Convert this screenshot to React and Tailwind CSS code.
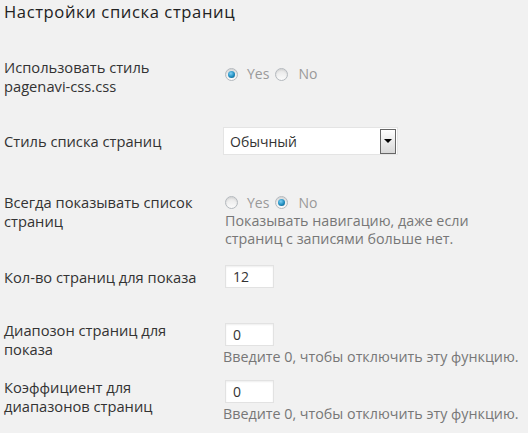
import React from "react";

function Radio({ checked }) {
  return (
    <span className="inline-flex items-center justify-center w-[13px] h-[13px] rounded-full border border-[#b4b9be] bg-gradient-to-b from-[#e6e6e6] to-[#fbfbfb] shadow-[inset_0_1px_2px_rgba(0,0,0,0.1)]">
      {checked && (
        <span className="block w-[7px] h-[7px] rounded-full bg-[radial-gradient(circle_at_40%_35%,#7fd0f5,#1e8cbe_55%,#0b4f78)]" />
      )}
    </span>
  );
}

function RadioPair({ yes }) {
  return (
    <div className="flex items-center text-[14px] text-[#999] h-[19px]">
      <Radio checked={yes} />
      <span className="ml-[9px] mr-[6px]">Yes</span>
      <Radio checked={!yes} />
      <span className="ml-[10px]">No</span>
    </div>
  );
}

function NumInput({ value }) {
  return (
    <div className="ml-[2px] w-[49px] h-[23px] bg-white border border-[#e2e2e2] shadow-[inset_0_1px_2px_rgba(0,0,0,0.07)] flex items-center pl-[7px] text-[14px] text-[#333]">
      {value}
    </div>
  );
}

const Desc = ({ children }) => (
  <div className="text-[14.3px] leading-[18px] text-[#777] whitespace-nowrap">{children}</div>
);

export default function App() {
  return (
    <div
      className="w-[528px] h-[433px] bg-[#f1f1f1] text-[#333] overflow-hidden pl-[4px]"
      style={{ fontFamily: '"Open Sans", "Noto Sans", sans-serif' }}
    >
      <h3 className="text-[16.6px] leading-[24px] tracking-[0.6px] text-[#222] whitespace-nowrap">
        Настройки списка страниц
      </h3>

      {/* Row 1 */}
      <div className="flex items-center mt-[34px] text-[14.7px] leading-[18.5px]">
        <div className="w-[219px]">
          Использовать стиль
          <br />
          pagenavi-css.css
        </div>
        <div className="pl-[2px] mb-[4px]">
          <RadioPair yes />
        </div>
      </div>

      {/* Row 2 */}
      <div className="flex items-center mt-[32px] text-[14.7px]">
        <div className="w-[219px]">Стиль списка страниц</div>
        <div className="w-[175px] h-[28px] bg-white border border-[#e4e4e4] flex items-center justify-between pl-[6px] pr-[1px] text-[14px] text-[#333]">
          <span>Обычный</span>
          <span className="w-[16px] h-[25px] border border-[#666] bg-gradient-to-b from-[#ffffff] to-[#d8d8d8] flex items-center justify-center">
            <span className="block w-0 h-0 border-l-[4px] border-r-[4px] border-t-[4px] border-l-transparent border-r-transparent border-t-black" />
          </span>
        </div>
      </div>

      {/* Row 3 */}
      <div className="flex mt-[38px] text-[14.7px] leading-[19px]">
        <div className="w-[219px]">
          Всегда показывать список
          <br />
          страниц
        </div>
        <div className="pl-[2px]">
          <RadioPair yes={false} />
          <Desc>
            Показывать навигацию, даже если
            <br />
            страниц с записями больше нет.
          </Desc>
        </div>
      </div>

      {/* Row 4 */}
      <div className="flex items-center mt-[16px] text-[14.7px]">
        <div className="w-[219px] mt-[2px]">Кол-во страниц для показа</div>
        <NumInput value="12" />
      </div>

      {/* Row 5 */}
      <div className="flex items-center mt-[33px] text-[14.7px] leading-[19px]">
        <div className="w-[219px] mb-[8px]">
          Диапозон страниц для
          <br />
          показа
        </div>
        <div>
          <NumInput value="0" />
          <div className="mt-[2px]">
            <Desc>Введите 0, чтобы отключить эту функцию.</Desc>
          </div>
        </div>
      </div>

      {/* Row 6 */}
      <div className="flex items-center mt-[11px] text-[14.7px] leading-[19px]">
        <div className="w-[219px] mb-[8px]">
          Коэффициент для
          <br />
          диапазонов страниц
        </div>
        <div>
          <NumInput value="0" />
          <div className="mt-[2px]">
            <Desc>Введите 0, чтобы отключить эту функцию.</Desc>
          </div>
        </div>
      </div>
    </div>
  );
}
